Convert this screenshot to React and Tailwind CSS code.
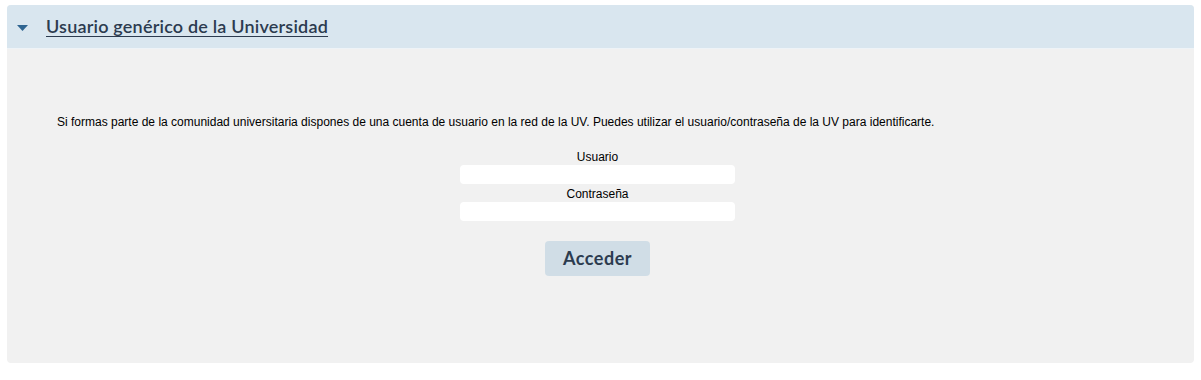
export default function App() {
  return (
    <div className="min-h-[380px] bg-white px-[7px] pt-[5px] font-['Liberation_Sans',Arial,sans-serif]">
      <div className="w-[1187px] overflow-hidden rounded-[4px] bg-[#f1f1f1]">
        {/* Header */}
        <div className="flex h-[44px] items-center border-b border-[#eef3f7] bg-[#d9e6ef] pl-[10px]">
          <svg width="11" height="6" viewBox="0 0 11 6" className="mt-[2px]">
            <polygon points="0,0 11,0 5.5,6" fill="#2f6591" />
          </svg>
          <a
            href="#"
            className="ml-[18px] font-['Lato',sans-serif] text-[18px] font-semibold tracking-[0.2px] text-[#2c3b4f] underline underline-offset-[3px]"
          >
            Usuario genérico de la Universidad
          </a>
        </div>

        {/* Body */}
        <div className="flex h-[314px] flex-col pl-[50px] pr-[56px] pt-[66px]">
          <p className="text-[12px] leading-[15px] text-black">
            Si formas parte de la comunidad universitaria dispones de una cuenta de usuario en la red de la UV. Puedes utilizar el usuario/contraseña de la UV para identificarte.
          </p>
          <div className="mt-[19px] flex flex-col items-center">
            <label className="text-[12px] leading-[16px] text-black">Usuario</label>
            <input type="text" className="h-[19px] w-[275px] rounded-[4px] bg-white outline-none" />
            <label className="mt-[2px] text-[12px] leading-[16px] text-black">Contraseña</label>
            <input type="password" className="h-[19px] w-[275px] rounded-[4px] bg-white outline-none" />
            <button className="mt-[20px] h-[35px] w-[105px] rounded-[4px] bg-[#d0dde6] font-['Lato',sans-serif] text-[18px] font-bold tracking-[0.5px] text-[#2c3b4f]">
              Acceder
            </button>
          </div>
        </div>
      </div>
    </div>
  );
}
